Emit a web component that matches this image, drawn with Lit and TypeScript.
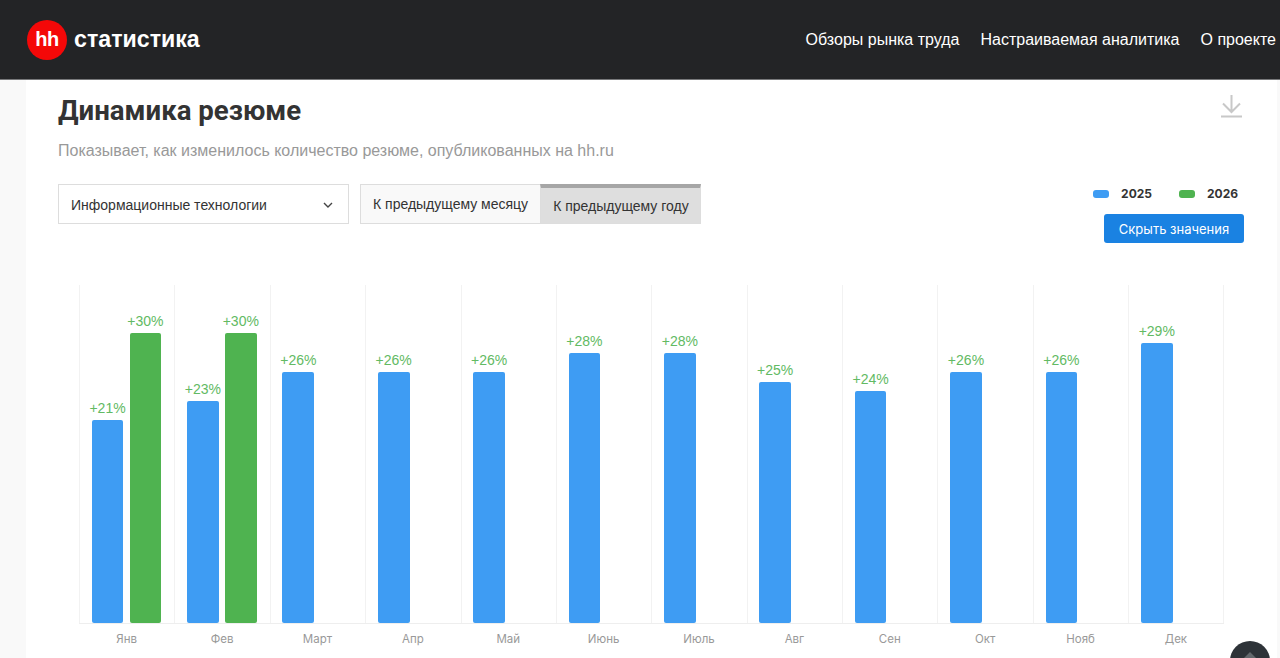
import { LitElement, html, css, svg } from "lit";
import { customElement } from "lit/decorators.js";

interface Month { name: string; a: number; b?: number; }

const MONTHS: Month[] = [
  { name: "Янв", a: 21, b: 30 },
  { name: "Фев", a: 23, b: 30 },
  { name: "Март", a: 26 },
  { name: "Апр", a: 26 },
  { name: "Май", a: 26 },
  { name: "Июнь", a: 28 },
  { name: "Июль", a: 28 },
  { name: "Авг", a: 25 },
  { name: "Сен", a: 24 },
  { name: "Окт", a: 26 },
  { name: "Нояб", a: 26 },
  { name: "Дек", a: 29 },
];

const PX_PER_PCT = 9.65;

@customElement("app-root")
export class AppRoot extends LitElement {
  static styles = css`
    :host {
      display: block;
      width: 1280px;
      height: 658px;
      overflow: hidden;
      position: relative;
      background: #f9f9f9;
      font-family: "Liberation Sans", Arial, sans-serif;
    }
    .header {
      height: 79px;
      background: #232426;
      border-bottom: 1px solid #77787a;
      display: flex;
      align-items: center;
      justify-content: space-between;
      padding-left: 27px;
      padding-right: 4px;
    }
    .brand {
      display: flex;
      align-items: center;
      gap: 7px;
    }
    .logo {
      width: 40px;
      height: 40px;
      border-radius: 50%;
      background: #f40808;
      color: #fff;
      font-weight: 700;
      font-size: 20px;
      letter-spacing: -0.5px;
      display: flex;
      align-items: center;
      justify-content: center;
    }
    .brand-name {
      color: #fff;
      font-weight: 700;
      font-size: 23.2px;
    }
    .nav {
      display: flex;
      gap: 21px;
      color: #fff;
      font-size: 16px;
    }
    .card {
      margin-left: 26px;
      margin-right: 3px;
      height: 579px;
      background: #fff;
      padding: 0 33px 0 32px;
      box-sizing: border-box;
      display: flex;
      flex-direction: column;
    }
    .title-row {
      display: flex;
      justify-content: space-between;
      align-items: flex-start;
      padding-top: 13px;
    }
    h1 {
      margin: 0;
      font-family: Roboto, sans-serif;
      font-weight: 700;
      font-size: 27.6px;
      line-height: 36px;
      color: #333;
    }
    .download {
      display: block;
      margin-top: 2px;
      margin-right: 1px;
    }
    .subtitle {
      margin-top: 12px;
      font-size: 16px;
      line-height: 20px;
      color: #999;
    }
    .controls {
      margin-top: 23px;
      display: flex;
      justify-content: space-between;
      align-items: flex-start;
    }
    .filters {
      display: flex;
      gap: 11px;
    }
    .select {
      width: 291px;
      height: 40px;
      box-sizing: border-box;
      border: 1px solid #ddd;
      background: #fff;
      padding: 1px 15px 0 12px;
      display: flex;
      align-items: center;
      justify-content: space-between;
      font-size: 14px;
      color: #333;
    }
    .toggle {
      display: flex;
      height: 40px;
      font-size: 14px;
      color: #333;
    }
    .toggle-btn {
      box-sizing: border-box;
      height: 40px;
      display: flex;
      align-items: center;
      padding: 0 12px;
      background: #f9f9f9;
      border: 1px solid #ddd;
      border-right: none;
    }
    .toggle-btn.active {
      background: #dedede;
      border: 1px solid #ddd;
      border-top: 4px solid #a6a6a6;
      padding-top: 1px;
      padding-right: 11px;
    }
    .aside {
      display: flex;
      flex-direction: column;
      align-items: flex-end;
      width: 151px;
      gap: 13px;
      margin-top: 3px;
    }
    .legend {
      display: flex;
      gap: 27px;
      margin-right: 6px;
      font-family: Inter, sans-serif;
      font-weight: 700;
      font-size: 12px;
      line-height: 14px;
      color: #333;
    }
    .legend-item {
      display: flex;
      align-items: center;
      gap: 12px;
    }
    .swatch {
      width: 16px;
      height: 8px;
      border-radius: 3px;
    }
    .hide-btn {
      width: 140px;
      height: 29px;
      border-radius: 3px;
      background: #1a82e2;
      color: #fff;
      font-family: Inter, sans-serif;
      font-size: 13px;
      display: flex;
      align-items: center;
      justify-content: center;
    }
    .chart {
      margin-top: 42px;
      margin-left: 21px;
      width: 1144.6px;
    }
    .plot {
      display: grid;
      grid-template-columns: repeat(12, 1fr);
      height: 339px;
      box-sizing: border-box;
      border-bottom: 1px solid #eee;
    }
    .col {
      box-sizing: border-box;
      border-left: 1px solid #f2f2f2;
      padding-left: 11.7px;
      display: flex;
      gap: 6.2px;
      align-items: flex-end;
    }
    .col:last-child {
      border-right: 1px solid #f2f2f2;
    }
    .series {
      width: 31.7px;
      display: flex;
      flex-direction: column;
      align-items: center;
    }
    .value {
      font-size: 14px;
      line-height: 16px;
      margin-bottom: 4px;
      color: #62ba63;
      white-space: nowrap;
    }
    .bar {
      width: 31.7px;
      border-radius: 2px;
    }
    .c2025 { background: #3e9cf3; }
    .c2026 { background: #4fb350; }
    .months {
      display: grid;
      grid-template-columns: repeat(12, 1fr);
      margin-top: 7px;
    }
    .month {
      font-family: Inter, sans-serif;
      font-size: 11.5px;
      line-height: 16px;
      color: #999;
      text-align: center;
    }
    .to-top {
      position: absolute;
      left: 1230px;
      top: 641px;
      width: 40px;
      height: 40px;
      border-radius: 50%;
      background: #2e3338;
      display: flex;
      justify-content: center;
      padding-top: 11px;
      box-sizing: border-box;
    }
  `;

  private series(pct: number, cls: string) {
    return html`<div class="series">
      <div class="value">+${pct}%</div>
      <div class="bar ${cls}" style="height:${Math.round(pct * PX_PER_PCT)}px"></div>
    </div>`;
  }

  render() {
    return html`
      <div class="header">
        <div class="brand">
          <div class="logo">hh</div>
          <div class="brand-name">статистика</div>
        </div>
        <div class="nav">
          <span>Обзоры рынка труда</span>
          <span>Настраиваемая аналитика</span>
          <span>О проекте</span>
        </div>
      </div>
      <div class="card">
        <div class="title-row">
          <h1>Динамика резюме</h1>
          <svg class="download" width="22" height="23" viewBox="0 0 22 23" fill="none" stroke="#c8c8c8" stroke-width="2">
            ${svg`<path d="M10.5 0V17M2 8.5L10.5 17L19 8.5M0 21.5H21"/>`}
          </svg>
        </div>
        <div class="subtitle">Показывает, как изменилось количество резюме, опубликованных на hh.ru</div>
        <div class="controls">
          <div class="filters">
            <div class="select">
              <span>Информационные технологии</span>
              <svg width="10" height="6" viewBox="0 0 10 6" fill="none" stroke="#444" stroke-width="1.4">
                ${svg`<path d="M1 1L5 5L9 1"/>`}
              </svg>
            </div>
            <div class="toggle">
              <div class="toggle-btn">К предыдущему месяцу</div>
              <div class="toggle-btn active">К предыдущему году</div>
            </div>
          </div>
          <div class="aside">
            <div class="legend">
              <div class="legend-item"><span class="swatch c2025"></span>2025</div>
              <div class="legend-item"><span class="swatch c2026"></span>2026</div>
            </div>
            <div class="hide-btn">Скрыть значения</div>
          </div>
        </div>
        <div class="chart">
          <div class="plot">
            ${MONTHS.map(
              (m) => html`<div class="col">
                ${this.series(m.a, "c2025")}
                ${m.b !== undefined ? this.series(m.b, "c2026") : ""}
              </div>`
            )}
          </div>
          <div class="months">
            ${MONTHS.map((m) => html`<div class="month">${m.name}</div>`)}
          </div>
        </div>
      </div>
      <div class="to-top">
        <svg width="18" height="12" viewBox="0 0 18 12" fill="#63686c">
          ${svg`<path d="M9 0L17 8V12H1V8Z"/>`}
        </svg>
      </div>
    `;
  }
}
